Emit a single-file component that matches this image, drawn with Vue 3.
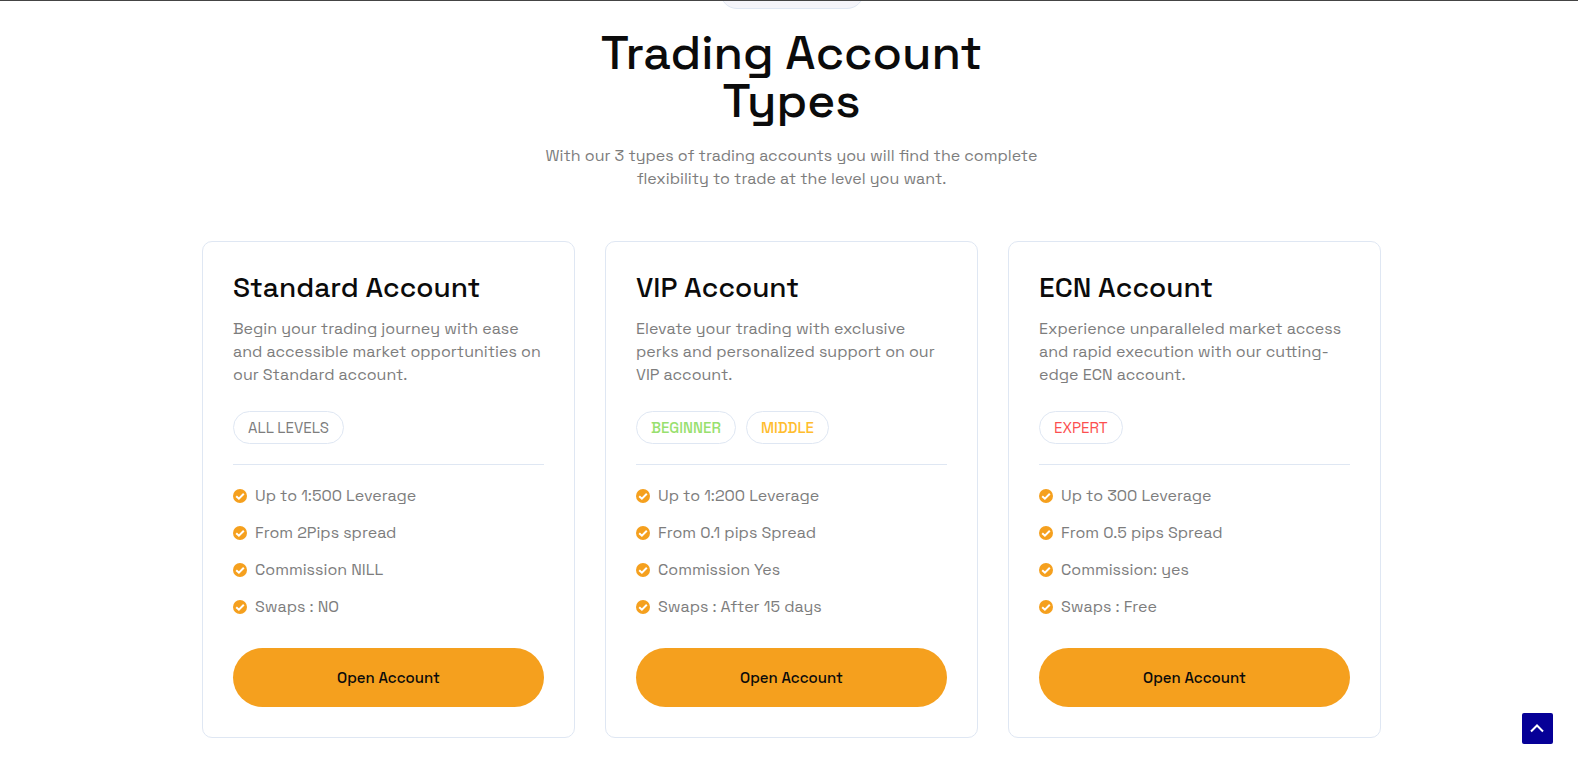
<!--
  App.vue - Trading account types section
-->
<template>
  <main class="account-types">
    <header class="intro">
      <div class="intro-pill"></div>
      <h1 class="intro-title">Trading Account Types</h1>
      <p class="intro-text">{{ intro }}</p>
    </header>

    <section class="cards">
      <article v-for="account in accounts" :key="account.name" class="card">
        <h2 class="card-title">{{ account.name }}</h2>
        <p class="card-text">{{ account.text }}</p>
        <div class="levels">
          <span v-for="level in account.levels" :key="level.label" class="level" :class="level.type">{{ level.label }}</span>
        </div>
        <ul class="features">
          <li v-for="feature in account.features" :key="feature" class="feature">
            <svg class="check" viewBox="0 0 14 14" aria-hidden="true">
              <circle cx="7" cy="7" r="7" />
              <path d="M3.2 7.2 5.9 9.7 10.8 4.8" />
            </svg>
            <span>{{ feature }}</span>
          </li>
        </ul>
        <a class="open-btn" href="#">Open Account</a>
      </article>
    </section>

    <button class="to-top" type="button" aria-label="Back to top" @click="scrollToTop">
      <svg viewBox="0 0 15 11" aria-hidden="true">
        <path d="M1 8.5 7 2.5 13 8.5" />
      </svg>
    </button>
  </main>
</template>

<script setup>
const intro = 'With our 3 types of trading accounts you will find the complete\nflexibility to trade at the level you want.'

const accounts = [
  {
    name: 'Standard Account',
    text: 'Begin your trading journey with ease\nand accessible market opportunities on\nour Standard account.',
    levels: [{ label: 'ALL LEVELS', type: 'all' }],
    features: ['Up to 1:500 Leverage', 'From 2Pips spread', 'Commission NILL', 'Swaps : NO']
  },
  {
    name: 'VIP Account',
    text: 'Elevate your trading with exclusive\nperks and personalized support on our\nVIP account.',
    levels: [
      { label: 'BEGINNER', type: 'beginner' },
      { label: 'MIDDLE', type: 'middle' }
    ],
    features: ['Up to 1:200 Leverage', 'From 0.1 pips Spread', 'Commission Yes', 'Swaps : After 15 days']
  },
  {
    name: 'ECN Account',
    text: 'Experience unparalleled market access\nand rapid execution with our cutting-\nedge ECN account.',
    levels: [{ label: 'EXPERT', type: 'expert' }],
    features: ['Up to 300 Leverage', 'From 0.5 pips Spread', 'Commission: yes', 'Swaps : Free']
  }
]

function scrollToTop() {
  window.scrollTo({ top: 0, behavior: 'smooth' })
}
</script>

<style>
body {
  background: #fff;
}
</style>

<style scoped>
.account-types {
  box-sizing: border-box;
  min-height: 100vh;
  padding: 0 16px 32px 21px;
  overflow: hidden;
  border-top: 1px solid #444;
  font-family: 'Space Grotesk', Inter, 'Liberation Sans', sans-serif;
  font-size: 16px;
  line-height: 23px;
  color: #7d7d7d;
}
.intro {
  display: flex;
  flex-direction: column;
  align-items: center;
  text-align: center;
}
.intro-pill {
  box-sizing: border-box;
  width: 144px;
  height: 34px;
  margin-top: -26px;
  border: 1px solid #dfe7f3;
  border-radius: 17px;
  background: #f5f5fa;
}
.intro-title {
  max-width: 480px;
  margin: 20px 0 19px;
  font-size: 48px;
  line-height: 48px;
  font-weight: 500;
  color: #0b0b0b;
}
.intro-text {
  margin: 0;
  white-space: pre-line;
}
.cards {
  display: grid;
  grid-template-columns: repeat(auto-fit, minmax(340px, 1fr));
  gap: 30px;
  max-width: 1179px;
  margin: 51px auto 0;
}
.card {
  display: flex;
  flex-direction: column;
  padding: 30px;
  border: 1px solid #dfe7f3;
  border-radius: 10px;
}
.card-title {
  margin: 0 0 15px;
  font-size: 28px;
  line-height: 30px;
  font-weight: 500;
  color: #0b0b0b;
}
.card-text {
  margin: 0;
  white-space: pre-line;
}
.levels {
  display: flex;
  gap: 10px;
  margin-top: 25px;
  padding-bottom: 20px;
  border-bottom: 1px solid #dfe7f3;
}
.level {
  padding: 4px 14px;
  border: 1px solid #dfe7f3;
  border-radius: 17px;
  font-size: 15px;
}
.level.beginner {
  font-weight: 500;
  color: #98e06e;
}
.level.middle {
  font-weight: 500;
  color: #ffbd2e;
}
.level.expert {
  color: #fc4f4f;
}
.features {
  display: flex;
  flex-direction: column;
  gap: 14px;
  margin: 19px 0 30px;
  padding: 0;
  list-style: none;
}
.feature {
  display: flex;
  align-items: center;
  gap: 8px;
}
.check {
  width: 14px;
  height: 14px;
}
.check circle {
  fill: #f5a01e;
}
.check path {
  fill: none;
  stroke: #fff;
  stroke-width: 2;
}
.open-btn {
  padding: 18px;
  border-radius: 30px;
  background: #f5a01e;
  font-size: 15px;
  font-weight: 500;
  text-align: center;
  text-decoration: none;
  color: #0b0b0b;
}
.to-top {
  position: fixed;
  right: 25px;
  bottom: 26px;
  display: flex;
  align-items: center;
  justify-content: center;
  width: 31px;
  height: 31px;
  padding: 0;
  border: 0;
  border-radius: 2px;
  background: #060097;
  cursor: pointer;
}
.to-top svg {
  width: 15px;
  height: 11px;
}
.to-top path {
  fill: none;
  stroke: #fff;
  stroke-width: 2;
}
</style>
